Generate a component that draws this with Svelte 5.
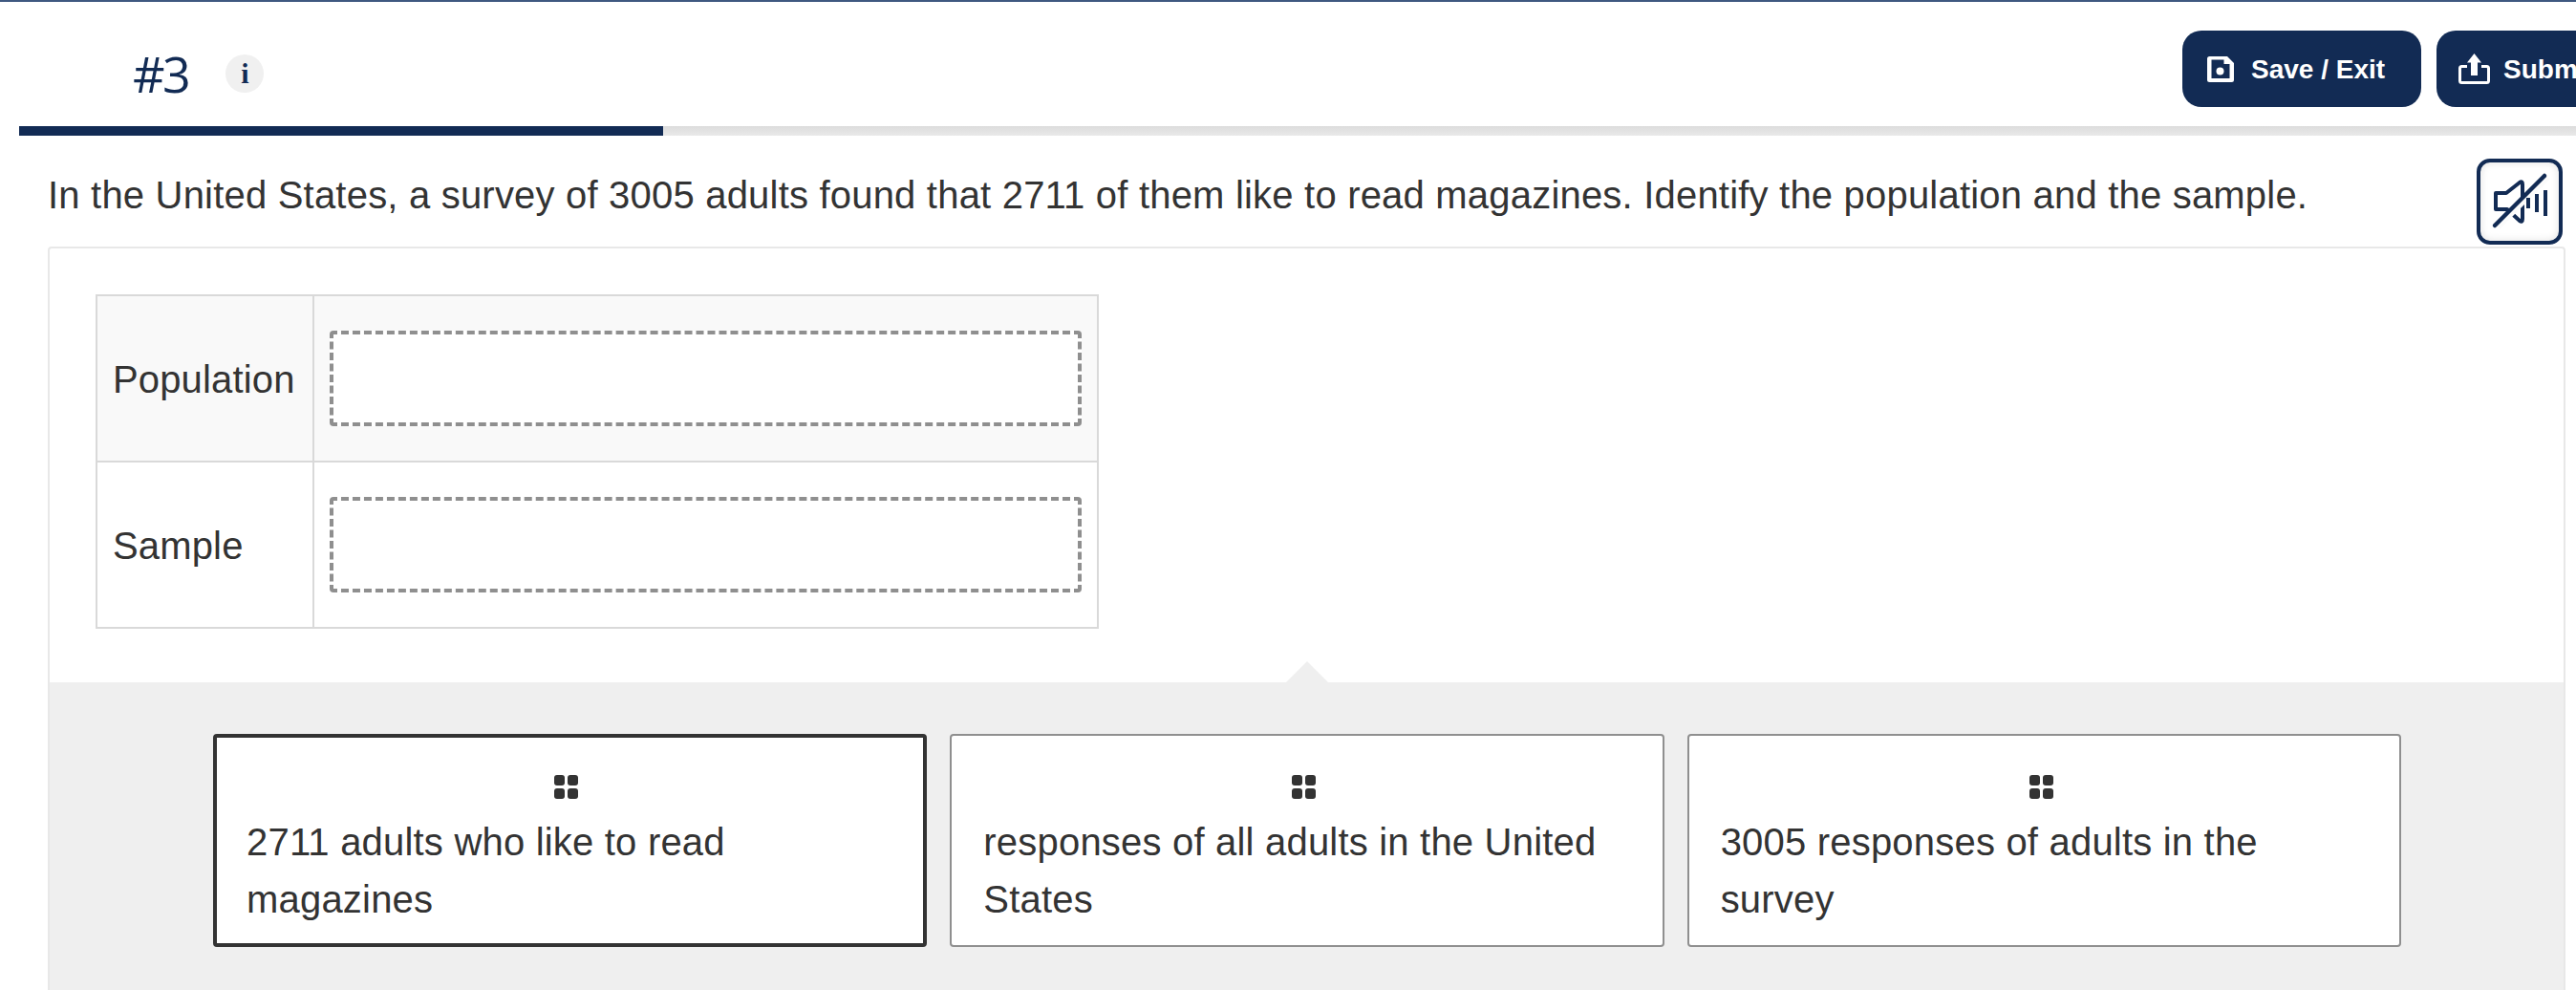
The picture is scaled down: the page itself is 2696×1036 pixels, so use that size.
<script>
  const rows = [
    { label: 'Population', shaded: true },
    { label: 'Sample', shaded: false },
  ];

  const answers = [
    { text: '2711 adults who like to read magazines', selected: true },
    { text: 'responses of all adults in the United States', selected: false },
    { text: '3005 responses of adults in the survey', selected: false },
  ];
</script>

<div class="page">
  <header class="header">
    <div class="title">
      <span class="number">#3</span>
      <span class="info">i</span>
    </div>
    <div class="actions">
      <button class="action save">
        <svg width="28" height="27" viewBox="0 0 28 27">
          <path fill="#fff" fill-rule="evenodd" d="M2.500 0H21L28 7V24.500A2.500 2.500 0 0 1 25.500 27H2.500A2.500 2.500 0 0 1 0 24.500V2.500A2.500 2.500 0 0 1 2.500 0ZM4.500 3.500V23H23.500V8H17.500V3.500Z" />
          <circle cx="13.500" cy="15.500" r="4" fill="#fff" />
        </svg>
        <span>Save / Exit</span>
      </button>
      <button class="action submit">
        <svg width="34" height="34" viewBox="0 0 34 34">
          <path fill="none" stroke="#fff" stroke-width="3" stroke-linejoin="round" d="M9 14.500H3.500A2 2 0 0 0 1.500 16.500V29.500A2 2 0 0 0 3.500 31.500H29.500A2 2 0 0 0 31.500 29.500V16.500A2 2 0 0 0 29.500 14.500H24" />
          <path fill="#fff" d="M16.500 1L24 10.500H20V24H13V10.500H9Z" />
        </svg>
        <span>Submit</span>
      </button>
    </div>
  </header>

  <div class="progress">
    <div class="progress-fill"></div>
  </div>

  <div class="question">
    <p>In the United States, a survey of 3005 adults found that 2711 of them like to read magazines. Identify the population and the sample.</p>
    <button class="sound" aria-label="Sound off">
      <svg width="82" height="82" viewBox="4 4 82 82">
        <path fill="none" stroke="#122b54" stroke-width="4" stroke-linejoin="round" d="M20 36H31L45 25Q48 23 48 27V63Q48 67 45 65L32 53H20Z" />
        <path stroke="#fbfbfb" stroke-width="7" d="M22 71L74 19" />
        <path fill="#122b54" d="M52 41h4v11h-4zM61 37h4v19h-4zM70 33h4v27h-4z" />
        <path stroke="#122b54" stroke-width="4.500" stroke-linecap="round" d="M19 70L71 18" />
      </svg>
    </button>
  </div>

  <section class="panel">
    <div class="match">
      <table>
        <tbody>
          {#each rows as row}
            <tr class:shaded={row.shaded}>
              <td class="label">{row.label}</td>
              <td class="slot"><div class="drop"></div></td>
            </tr>
          {/each}
        </tbody>
      </table>
    </div>

    <div class="tray">
      <span class="arrow"></span>
      {#each answers as answer}
        <div class="answer" class:selected={answer.selected}>
          <div class="grip">
            <i></i><i></i><i></i><i></i>
          </div>
          <div class="answer-text">{answer.text}</div>
        </div>
      {/each}
    </div>
  </section>
</div>

<style>
  :global(body) {
    margin: 0;
    background: #fff;
  }

  .page {
    width: 2696px;
    height: 1036px;
    overflow: hidden;
    box-sizing: border-box;
    border-top: 2px solid #3f5880;
    color: #333;
    font-family: "Liberation Sans", Arial, sans-serif;
  }

  .header {
    display: flex;
    align-items: flex-start;
    height: 130px;
    padding-left: 139px;
    box-sizing: border-box;
  }

  .title {
    display: flex;
    align-items: center;
    gap: 39px;
    padding-top: 55px;
  }

  .number {
    font-family: "Open Sans", sans-serif;
    font-size: 52px;
    font-weight: 500;
    line-height: 40px;
    letter-spacing: -2.5px;
    color: #122b54;
  }

  .info {
    width: 40px;
    height: 40px;
    border-radius: 50%;
    background: #f0f0f0;
    color: #122b54;
    font-family: "Liberation Serif", serif;
    font-weight: bold;
    font-size: 30px;
    line-height: 40px;
    text-align: center;
  }

  .actions {
    display: flex;
    gap: 16px;
    margin-left: auto;
    margin-right: -100px;
    padding-top: 30px;
  }

  .action {
    display: flex;
    align-items: center;
    height: 80px;
    padding: 0;
    border: 0;
    border-radius: 20px;
    background: #122b54;
    color: #fff;
    font-family: "Liberation Sans", Arial, sans-serif;
    font-size: 28px;
    font-weight: bold;
    white-space: nowrap;
  }

  .action span {
    padding-top: 2px;
  }

  .save {
    width: 250px;
    padding-left: 26px;
    gap: 18px;
  }

  .submit {
    width: 246px;
    padding-left: 23px;
    gap: 13px;
  }

  .progress {
    height: 10px;
    margin-left: 20px;
    background: linear-gradient(#dcdcdc, #e9e9e9);
  }

  .progress-fill {
    width: 674px;
    height: 100%;
    background: #122b54;
  }

  .question {
    display: flex;
    align-items: flex-start;
    height: 116px;
    padding: 24px 14px 0 50px;
    box-sizing: border-box;
  }

  .question p {
    margin: 0;
    padding-top: 8px;
    font-size: 40px;
    line-height: 60px;
    letter-spacing: 0.2px;
    white-space: nowrap;
  }

  .sound {
    width: 90px;
    height: 90px;
    margin-left: auto;
    padding: 0;
    box-sizing: border-box;
    border: 4px solid #122b54;
    border-radius: 14px;
    background: #fff;
    box-shadow: inset 0 0 8px rgba(0, 0, 0, 0.12);
  }

  .sound svg {
    display: block;
  }

  .panel {
    width: 2635px;
    margin-left: 50px;
    box-sizing: border-box;
    border: 2px solid #e8e8e8;
    border-bottom: 0;
    border-radius: 4px 4px 0 0;
  }

  .match {
    height: 454px;
    padding: 48px 0 0 48px;
    box-sizing: border-box;
  }

  table {
    width: 1050px;
    height: 350px;
    border-collapse: collapse;
    table-layout: fixed;
  }

  tr.shaded {
    background: #f9f9f9;
  }

  td {
    border: 2px solid #d9d9d9;
    padding: 0;
  }

  .label {
    width: 227px;
    padding: 2px 0 0 16px;
    box-sizing: border-box;
    font-size: 40px;
    letter-spacing: 0.15px;
  }

  .slot {
    padding: 0 16px;
  }

  .drop {
    height: 100px;
    box-sizing: border-box;
    border: 4px dashed #8f8f8f;
    border-radius: 4px;
    background: #fff;
  }

  .tray {
    position: relative;
    display: flex;
    gap: 24px;
    height: 400px;
    padding: 54px 170px 0 171px;
    box-sizing: border-box;
    background: #efefef;
  }

  .arrow {
    position: absolute;
    left: 1294px;
    top: -22px;
    width: 0;
    height: 0;
    border-left: 22px solid transparent;
    border-right: 22px solid transparent;
    border-bottom: 22px solid #efefef;
  }

  .answer {
    width: 748px;
    height: 223px;
    box-sizing: border-box;
    border: 2px solid #8f8f8f;
    border-radius: 4px;
    background: #fff;
    padding: 0 34px 0 33px;
  }

  .answer.selected {
    border: 4px solid #333;
    padding-left: 31px;
  }

  .grip {
    display: grid;
    grid-template-columns: 11px 11px;
    gap: 3px;
    justify-content: center;
    margin-top: 41px;
    padding-right: 5px;
  }

  .answer.selected .grip {
    margin-top: 39px;
  }

  .grip i {
    display: block;
    width: 11px;
    height: 11px;
    border-radius: 3px;
    background: #333;
  }

  .answer-text {
    margin-top: 15px;
    font-size: 40px;
    line-height: 60px;
    letter-spacing: 0.2px;
  }
</style>
